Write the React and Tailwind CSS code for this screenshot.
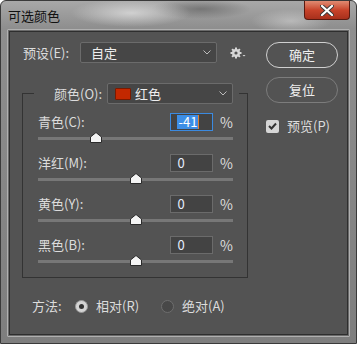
import React from 'react';

const font = { fontFamily: '"Noto Sans CJK SC", "Noto Sans", sans-serif' };

const Thumb = ({ left }) => (
    <svg
        className="absolute top-[1px]"
        style={{ left: left - 6 }}
        width="12"
        height="11"
        viewBox="0 0 12 11"
    >
        <path d="M6 0.5 L11.5 5 L11.5 10.5 L0.5 10.5 L0.5 5 Z" fill="#f4f4f4" stroke="#2a2a2a" strokeWidth="1" />
    </svg>
);

const SliderRow = ({ label, value, pct, focused, last }) => (
    <div className={last ? '' : 'mb-[8px]'}>
        <div className="flex items-center h-[18px]">
            <div className="w-[134px] text-[13px] text-[#dcdcdc] whitespace-nowrap">{label}</div>
            <div
                className={`w-[43px] h-[18px] flex items-center pl-[6px] text-[13px] bg-[#434343] border ${
                    focused ? 'border-[#3b8ae0]' : 'border-[#6b6b6b]'
                }`}
            >
                {focused ? (
                    <span className="bg-[#3d8ee6] text-white leading-[14px] px-[1px] border-r border-[#e08030]">{value}</span>
                ) : (
                    <span className="text-[#e6eeff]">{value}</span>
                )}
            </div>
            <div className="ml-[7px] text-[14px] text-[#dcdcdc]">%</div>
        </div>
        <div className="relative h-[15px] w-[195px]">
            <div className="absolute left-0 right-0 top-[6px] h-[3px] bg-[#777777]" />
            <Thumb left={97.5 + pct * 0.975} />
        </div>
    </div>
);

const Chevron = () => (
    <svg width="8" height="5" viewBox="0 0 8 5">
        <path d="M0.5 0.5 L4 4 L7.5 0.5" fill="none" stroke="#bdbdbd" strokeWidth="1" />
    </svg>
);

const Gear = () => (
    <svg width="16" height="12" viewBox="0 0 16 12">
        <g fill="#d8d8d8">
            <circle cx="6" cy="6" r="4" />
            <rect x="5" y="0.5" width="2" height="11" />
            <rect x="0.5" y="5" width="11" height="2" />
            <rect x="5" y="0.5" width="2" height="11" transform="rotate(45 6 6)" />
            <rect x="5" y="0.5" width="2" height="11" transform="rotate(-45 6 6)" />
        </g>
        <circle cx="6" cy="6" r="1.6" fill="#535353" />
        <path d="M12.5 8 L15.5 8 L14 9.5 Z" fill="#d8d8d8" />
    </svg>
);

export default function App() {
    return (
        <div
            className="w-[357px] h-[344px] overflow-hidden relative border border-[#3a3a3a] rounded-t-[6px] flex flex-col"
            style={{
                ...font,
                background:
                    'radial-gradient(ellipse 60px 14px at 130px 12px, rgba(230,230,230,0.7), transparent), radial-gradient(ellipse 50px 10px at 200px 8px, rgba(90,90,90,0.6), transparent), radial-gradient(ellipse 40px 12px at 290px 20px, rgba(220,220,220,0.5), transparent), linear-gradient(180deg, #a8a8a8 0%, #8e8e8e 8%, #7e7e7e 100%)',
            }}
        >
            {/* title bar */}
            <div className="h-[28px] shrink-0 flex items-start justify-between pl-[7px]">
                <div className="mt-[5px] text-[13px] text-[#111111]">可选颜色</div>
                <div className="mr-[6px] w-[46px] h-[19px] rounded-b-[4px] border border-t-0 border-[#5a1a10] flex items-center justify-center bg-gradient-to-b from-[#e08b72] via-[#c8432a] to-[#a8301c]">
                    <svg width="14" height="11" viewBox="0 0 14 11">
                        <path d="M2 1 L12 10 M12 1 L2 10" stroke="#3a3a3a" strokeWidth="4" strokeLinecap="round" />
                        <path d="M2 1 L12 10 M12 1 L2 10" stroke="#ffffff" strokeWidth="2.2" strokeLinecap="round" />
                    </svg>
                </div>
            </div>

            {/* content */}
            <div className="mx-[6px] mb-[6px] flex-1 border border-[#b0b0b0] rounded-[1px] p-[1px] bg-[#6a6a6a]">
                <div className="h-full bg-[#535353] border border-[#2e2e2e] flex pl-[12px] pr-[9px] pt-[10px]">
                    {/* left column */}
                    <div className="w-[226px] shrink-0">
                        <div className="flex items-center h-[21px] pl-[1px]">
                            <div className="w-[57px] text-[13px] text-[#dcdcdc] whitespace-nowrap">预设(E):</div>
                            <div className="w-[137px] h-[21px] bg-[#464646] border border-[#6b6b6b] rounded-[2px] flex items-center justify-between pl-[10px] pr-[5px]">
                                <span className="text-[13px] text-[#eeeeee]">自定</span>
                                <Chevron />
                            </div>
                            <div className="ml-[13px] mt-[1px]">
                                <Gear />
                            </div>
                        </div>

                        <fieldset className="mt-[20px] border border-[#333333] p-0 min-w-0 w-[226px] h-[195px]">
                            <legend className="ml-[11px] p-0 w-[205px]">
                                <div className="flex items-center h-[21px] whitespace-nowrap pl-[20px]">
                                    <span className="text-[13px] text-[#dcdcdc] w-[48px] shrink-0">颜色(O):</span>
                                    <div className="ml-[5px] w-[126px] shrink-0 h-[21px] bg-[#464646] border border-[#6b6b6b] rounded-[2px] flex items-center justify-between pl-[7px] pr-[5px]">
                                        <div className="flex items-center">
                                            <div className="w-[16px] h-[12px] bg-[#c32800] border border-[#7a1a00] rounded-[1px]" />
                                            <span className="ml-[4px] text-[13px] text-[#eeeeee]">红色</span>
                                        </div>
                                        <Chevron />
                                    </div>
                                </div>
                            </legend>
                            <div className="pt-[9px] pl-[15px] pr-[14px] pb-[6px]">
                                <SliderRow label="青色(C):" value="-41" pct={-41} focused />
                                <SliderRow label="洋红(M):" value="0" pct={0} />
                                <SliderRow label="黄色(Y):" value="0" pct={0} />
                                <SliderRow label="黑色(B):" value="0" pct={0} last />
                            </div>
                        </fieldset>

                        <div className="mt-[20px] flex items-center h-[16px] pl-[10px] text-[13px] text-[#dcdcdc] whitespace-nowrap">
                            <span className="w-[43px]">方法:</span>
                            <div className="w-[13px] h-[13px] rounded-full bg-[#d4d4d4] border border-[#9a9a9a] flex items-center justify-center">
                                <div className="w-[5px] h-[5px] rounded-full bg-[#333333]" />
                            </div>
                            <span className="ml-[8px] w-[65px]">相对(R)</span>
                            <div className="w-[13px] h-[13px] rounded-full bg-[#484848] border border-[#6e6e6e]" />
                            <span className="ml-[8px]">绝对(A)</span>
                        </div>
                    </div>

                    {/* right column */}
                    <div className="ml-[18px] w-[75px] flex flex-col">
                        <button className="h-[26px] rounded-full border-[1.5px] border-[#d0d0d0] text-[13px] text-[#eeeeee]">
                            确定
                        </button>
                        <button className="mt-[9px] h-[26px] rounded-full border border-[#7c7c7c] text-[13px] text-[#eeeeee]">
                            复位
                        </button>
                        <div className="mt-[15px] flex items-center h-[16px]">
                            <div className="w-[13px] h-[13px] bg-[#d6d6d6] rounded-[2px] flex items-center justify-center">
                                <svg width="9" height="8" viewBox="0 0 9 8">
                                    <path d="M1 4 L3.5 6.5 L8 1.5" fill="none" stroke="#333333" strokeWidth="2" />
                                </svg>
                            </div>
                            <span className="ml-[8px] text-[13px] text-[#dcdcdc]">预览(P)</span>
                        </div>
                    </div>
                </div>
            </div>
        </div>
    );
}
